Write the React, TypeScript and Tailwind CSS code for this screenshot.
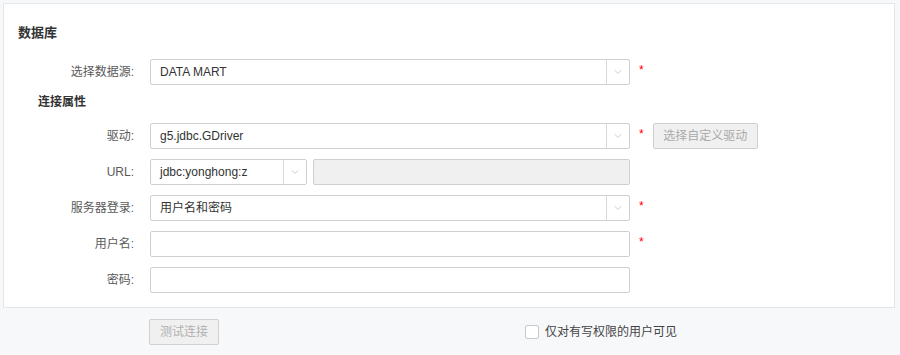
import { ChevronDown } from "lucide-react";

const FONT = { fontFamily: '"Liberation Sans", "Noto Sans CJK SC", sans-serif' };

function Select({ value, width }: { value: string; width: string }) {
  return (
    <div className={`flex h-[26px] ${width} border border-[#cfcfcf] rounded-[2px] bg-white`}>
      <div className="flex-1 flex items-center pl-[9px] text-[12px] text-[#333]">{value}</div>
      <div className="w-[23px] border-l border-[#d8d8d8] flex items-center justify-center">
        <ChevronDown size={12} strokeWidth={1.5} className="text-[#bdbdbd]" />
      </div>
    </div>
  );
}

function Row({ label, children }: { label: string; children: React.ReactNode }) {
  return (
    <div className="flex items-center h-[26px]">
      <div className="w-[133px] pr-[3px] text-right text-[12px] text-[#5a5a5a]">{label}</div>
      <div className="ml-[13px] flex items-center">{children}</div>
    </div>
  );
}

function Star() {
  return <span className="ml-[9px] text-[#f00] text-[12px] leading-none self-start mt-[5px]">*</span>;
}

export default function App() {
  return (
    <div className="w-[900px] h-[355px] bg-[#f7f8fa] pt-[3px] pl-[3px]" style={FONT}>
      <div className="w-[892px] h-[305px] bg-white border border-[#e4e6ea] pt-[21px]">
        <h2 className="pl-[14px] text-[13px] font-bold text-[#333] leading-[16px]">数据库</h2>
        <div className="mt-[18px] flex flex-col">
          <Row label="选择数据源:">
            <Select value="DATA MART" width="w-[480px]" />
            <Star />
          </Row>
          <div className="pl-[34px] h-[38px] pb-[4px] flex items-center text-[12px] font-bold text-[#333]">连接属性</div>
          <div className="flex flex-col gap-[10px]">
            <Row label="驱动:">
              <Select value="g5.jdbc.GDriver" width="w-[480px]" />
              <Star />
              <button className="ml-[9px] h-[26px] w-[105px] border border-[#cfcfcf] rounded-[2px] bg-[#f0f0f0] text-[12px] text-[#aaa]">
                选择自定义驱动
              </button>
            </Row>
            <Row label="URL:">
              <Select value="jdbc:yonghong:z" width="w-[157px]" />
              <div className="ml-[6px] h-[26px] w-[317px] border border-[#cfcfcf] rounded-[2px] bg-[#f0f0f0]" />
            </Row>
            <Row label="服务器登录:">
              <Select value="用户名和密码" width="w-[480px]" />
              <Star />
            </Row>
            <Row label="用户名:">
              <div className="h-[26px] w-[480px] border border-[#cfcfcf] rounded-[2px] bg-white" />
              <Star />
            </Row>
            <Row label="密码:">
              <div className="h-[26px] w-[480px] border border-[#cfcfcf] rounded-[2px] bg-white" />
            </Row>
          </div>
        </div>
      </div>
      <div className="flex items-center mt-[11px]">
        <button className="ml-[146px] h-[26px] w-[70px] border border-[#d0d0d0] rounded-[2px] bg-[#f0f0f0] text-[12px] text-[#b0b0b0]">
          测试连接
        </button>
        <div className="ml-[306px] flex items-center">
          <span className="w-[14px] h-[14px] border border-[#c8c8c8] rounded-[2px] bg-white" />
          <span className="ml-[6px] text-[12px] text-[#444]">仅对有写权限的用户可见</span>
        </div>
      </div>
    </div>
  );
}
